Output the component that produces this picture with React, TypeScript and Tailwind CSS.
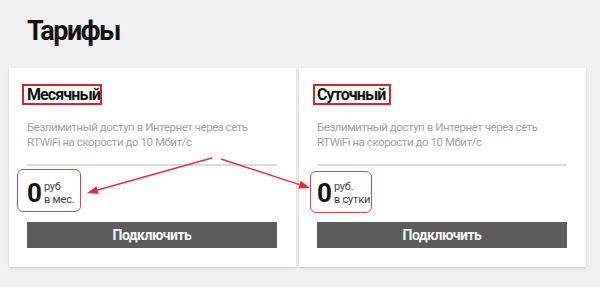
import React from "react";

const font = { fontFamily: "Roboto, 'Liberation Sans', sans-serif" };

function Card({ title, unit1, unit2 }: { title: string; unit1: string; unit2: string }) {
  return (
    <div className="flex-1 h-[199px] bg-white shadow-[0_1px_2px_rgba(0,0,0,0.18)] pt-[17px] pl-[18px] pr-[19px]">
      <div className="text-[16px] leading-[20px] font-bold tracking-[-0.9px] text-[#111]">{title}</div>
      <div className="mt-[15px] text-[11.5px] leading-[15px] tracking-[-0.45px] text-[#a3a3a3]">
        Безлимитный доступ в Интернет через сеть
        <br />
        RTWiFi на скорости до 10 Мбит/с
      </div>
      <div className="mt-[14px] h-[2px] bg-[#dcdcdc]" />
      <div className="mt-[14px] flex items-start gap-[2px]">
        <div className="text-[26px] leading-[26px] font-bold text-[#111]">0</div>
        <div className="text-[11px] leading-[13px] tracking-[-0.2px] text-[#444]">
          <div>{unit1}</div>
          <div>{unit2}</div>
        </div>
      </div>
      <div className="mt-[16px] h-[26px] bg-[#5c5c5c] flex items-center justify-center text-[14px] font-bold tracking-[-0.5px] text-[#f7f7f7]">
        Подключить
      </div>
    </div>
  );
}

export default function App() {
  return (
    <div className="relative w-[600px] h-[287px] bg-[#f1f1f1] overflow-hidden" style={font}>
      <div className="pt-[17px] pl-[27px] h-[68px]">
        <h1 className="text-[27px] leading-[28px] font-bold tracking-[-1.5px] text-[#111]">Тарифы</h1>
      </div>
      <div className="flex gap-[3px] pl-[9px] pr-[14px]">
        <Card title="Месячный" unit1="руб" unit2="в мес." />
        <Card title="Суточный" unit1="руб." unit2="в сутки" />
      </div>

      {/* annotations */}
      <div className="absolute left-[22px] top-[84px] w-[80px] h-[21px] border-2 border-[#d8232f]" />
      <div className="absolute left-[313px] top-[84px] w-[78px] h-[21px] border-2 border-[#d8232f]" />
      <div className="absolute left-[17px] top-[169px] w-[64px] h-[43px] border-[1.5px] border-[#d94452] rounded-[6px]" />
      <div className="absolute left-[310px] top-[171px] w-[62px] h-[42px] border-[1.5px] border-[#d94452] rounded-[6px]" />
      <svg className="absolute left-0 top-0" width="600" height="287" viewBox="0 0 600 287">
        <line x1="212" y1="158" x2="97.6" y2="190" stroke="#e0303a" strokeWidth="1.5" />
        <polygon points="87,193 96.5,186.2 98.7,193.9" fill="#e0303a" />
        <line x1="221" y1="159" x2="299.5" y2="184.6" stroke="#e0303a" strokeWidth="1.5" />
        <polygon points="310,188 298.3,188.4 300.7,180.8" fill="#e0303a" />
      </svg>
    </div>
  );
}
